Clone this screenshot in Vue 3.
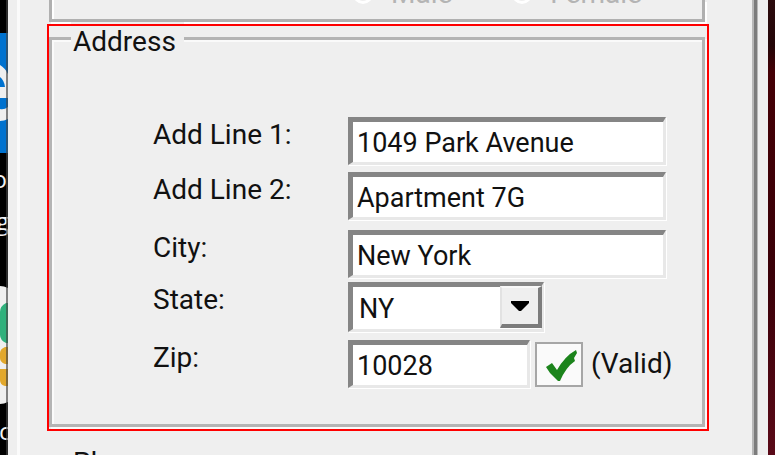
<script setup>
import { ref } from 'vue'

const line1 = ref('1049 Park Avenue')
const line2 = ref('Apartment 7G')
const city = ref('New York')
const state = ref('NY')
const zip = ref('10028')
const gender = ref('')
const states = ['NY', 'NJ', 'CT', 'PA']
</script>

<template>
  <div class="desktop">
    <div class="icons">
      <svg width="8" height="455" viewBox="0 0 8 455" aria-hidden="true">
        <rect width="8" height="455" fill="#000" />
        <rect y="33" width="8" height="120" fill="#0072cf" />
        <path d="M0 65 Q5 68 8 74 V98 H0 V87 H5 Q4 80 0 77Z" fill="#efefef" />
        <path d="M0 109 Q4 110 8 107 V119 Q4 121 0 121Z" fill="#efefef" />
        <path d="M0 286 Q4 286 8 288 V402 Q4 404 0 404Z" fill="#efefef" />
        <path d="M8 303 H6 Q0 306 0 312 V335 Q0 340 6 343 H8Z" fill="#2fb17c" />
        <path d="M8 347 H5 Q0 349 0 353 V358 Q0 362 5 364 H8Z M0 369 H8 V386 H5 Q0 385 0 380Z" fill="#e2a82c" />
        <text class="caption" x="7" y="188" text-anchor="end">o</text>
        <text class="caption" x="9" y="230" text-anchor="end">g</text>
        <text class="caption" x="-1" y="440">c</text>
        <rect x="6" width="2" height="455" fill="#444" fill-opacity=".65" />
      </svg>
    </div>

    <main class="window">
      <div class="page">
        <section class="gender">
          <label class="option"><input v-model="gender" type="radio" name="gender" value="m" />Male</label>
          <label class="option"><input v-model="gender" type="radio" name="gender" value="f" />Female</label>
        </section>

        <div class="marked">
          <fieldset class="group">
            <legend>Address</legend>
            <div class="form">
              <label for="line1">Add Line 1:</label>
              <input id="line1" v-model="line1" class="field" type="text" />

              <label for="line2">Add Line 2:</label>
              <input id="line2" v-model="line2" class="field" type="text" />

              <label for="city">City:</label>
              <input id="city" v-model="city" class="field" type="text" />

              <label for="state">State:</label>
              <div class="combo">
                <select id="state" v-model="state" class="field">
                  <option v-for="s in states" :key="s">{{ s }}</option>
                </select>
                <span class="drop">
                  <svg width="18" height="10" viewBox="0 0 18 10" aria-hidden="true">
                    <path d="M0 0H18V2L10 10H8L0 2Z" fill="#000" />
                  </svg>
                </span>
              </div>

              <label for="zip">Zip:</label>
              <div class="zip">
                <input id="zip" v-model="zip" class="field short" type="text" />
                <span class="check">
                  <svg width="40" height="36" viewBox="0 0 40 36" aria-hidden="true">
                    <path d="M7 21L13 17L18 24Q26 10 37 4L38 7L35 12L36 15Q27 21 21 35H19L11 27Z" fill="#1c841c" />
                  </svg>
                </span>
                <output for="zip">(Valid)</output>
              </div>
            </div>
          </fieldset>
        </div>

        <fieldset class="group phone">
          <legend>Phone</legend>
        </fieldset>
      </div>
    </main>

    <div class="wallpaper"></div>
  </div>
</template>

<style>
body {
  background: #efefef;
}
</style>

<style scoped>
.desktop {
  display: flex;
  height: 100vh;
  overflow: hidden;
  color: #111;
  font: 28px/34px Roboto, "Liberation Sans", sans-serif;
}
.icons {
  flex: 0 0 8px;
  background: #000;
}
.icons svg {
  display: block;
}
.caption {
  fill: #f4f4f4;
  font: 24px "Open Sans", sans-serif;
}
.wallpaper {
  flex: 0 0 7px;
  background: linear-gradient(#2c0b0d, #240608 10%, #450006 16%, #3a0008 60%, #5a0a18);
}
.window {
  display: flex;
  flex: 1;
  min-width: 0;
  padding: 0 11px 0 9px;
  background: #efefef;
}
.page {
  flex: 1;
  min-width: 0;
  padding: 0 45px 0 27px;
  border-left: 3px solid #fbfbfb;
  border-right: 3px solid #7c7c7c;
  box-shadow: inset -2px 0 #b8b8b8, 1px 0 #b8b8b8;
}
.gender {
  display: flex;
  align-items: flex-end;
  gap: 60px;
  box-sizing: border-box;
  height: 22px;
  margin: 0 4px 0 2px;
  padding-left: 301px;
  border: 3px solid #b0b0b0;
  border-top: 0;
  box-shadow: 2px 2px #fff, inset 2px 0 #fff;
}
.option {
  display: flex;
  align-items: center;
  gap: 18px;
  margin-bottom: 8px;
  color: #b4b4b4;
}
.option input {
  appearance: none;
  width: 20px;
  height: 20px;
  margin: 0;
  border: 3px solid #fff;
  border-radius: 50%;
}
.marked {
  position: relative;
  display: flow-root;
  margin-top: 2px;
  padding-bottom: 4px;
}
.marked::after {
  position: absolute;
  inset: 0;
  border: 2px solid #f00;
  content: "";
  pointer-events: none;
}
.group {
  min-width: 0;
  margin: -2px 4px 0 2px;
  padding: 63px 36px 34px 101px;
  border: 3px solid #b4b4b4;
  box-shadow: 2px 2px #fafafa, inset 2px 2px #fafafa;
}
legend {
  margin-left: -82px;
  padding: 8px 8px 0 2px;
  background: #efefef;
  line-height: 24px;
}
.form {
  display: grid;
  grid-template-columns: 195px minmax(0, 1fr);
  grid-template-rows: 55px 58px 52px 58px 50px;
  align-items: start;
}
.form > label {
  padding-top: 1px;
}
.field {
  box-sizing: border-box;
  width: 100%;
  height: 48px;
  margin: 0;
  padding: 2px 4px 0;
  border: solid;
  border-width: 5px 3px 3px 5px;
  border-color: #858585 #e8e8e8 #e8e8e8 #858585;
  border-radius: 0;
  outline: 0;
  background: #fff;
  color: #111;
  font: 27px Roboto, "Liberation Sans", sans-serif;
  box-shadow: 1px 1px #fff;
}
.combo {
  display: grid;
  width: 196px;
}
.combo > * {
  grid-area: 1 / 1;
}
.combo .field {
  height: 50px;
  padding-left: 6px;
  appearance: none;
}
.drop {
  display: flex;
  align-items: center;
  justify-content: center;
  justify-self: end;
  align-self: center;
  box-sizing: border-box;
  width: 42px;
  height: 42px;
  margin-right: 2px;
  border: solid;
  border-width: 2px 4px 4px 2px;
  border-color: #f8f8f8 #7c7c7c #7c7c7c #e2e2e2;
  background: #efefef;
  pointer-events: none;
}
.zip {
  display: flex;
  align-items: center;
}
.short {
  flex: 0 0 182px;
}
.check {
  display: flex;
  flex: none;
  align-items: center;
  justify-content: center;
  box-sizing: border-box;
  width: 48px;
  height: 45px;
  margin: 0 8px 0 5px;
  border: 2px solid #a6a6a6;
  background: #fafafa;
}
.phone {
  margin-top: 12px;
}
</style>
